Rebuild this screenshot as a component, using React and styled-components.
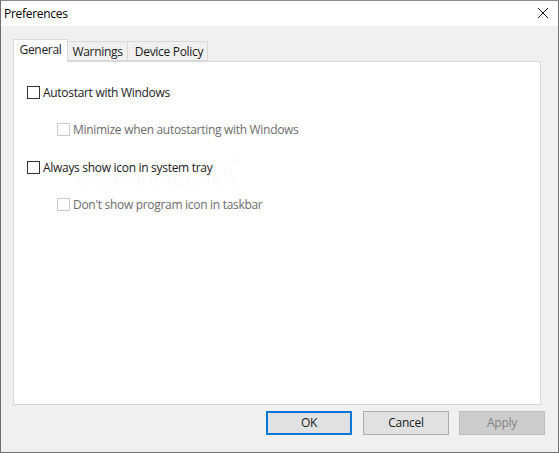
import React from 'react';
import styled, { createGlobalStyle } from 'styled-components';

const Global = createGlobalStyle`
  html, body { margin: 0; padding: 0; background: #f0f0f0; }
  #root { width: 559px; height: 453px; overflow: hidden; }
  * { box-sizing: border-box; }
`;

const Dialog = styled.div`
  position: relative;
  width: 559px;
  height: 453px;
  display: flex;
  flex-direction: column;
  background: #f0f0f0;
  border: 1px solid #6f6f6f;
  border-top-color: #8a8a8a;
  font-family: "Open Sans", "Noto Sans", sans-serif;
  font-size: 12px;
  letter-spacing: -0.3px;
  color: #000;
`;

const TitleBar = styled.div`
  height: 25px;
  flex: none;
  background: #fff;
  display: flex;
  align-items: center;
  justify-content: space-between;
  padding: 0 10px 1px 3px;
`;

const CloseButton = styled.svg`
  width: 10px;
  height: 10px;
`;

const Content = styled.div`
  flex: 1;
  min-height: 0;
  display: flex;
  flex-direction: column;
  padding: 13px 13px 0 12px;
`;

const TabStrip = styled.div`
  display: flex;
  align-items: flex-end;
  height: 22px;
  flex: none;
  position: relative;
  z-index: 1;
`;

const Tab = styled.div`
  height: ${p => (p.$active ? '23px' : '20px')};
  width: ${p => p.$w}px;
  margin-bottom: ${p => (p.$active ? '-1px' : '0')};
  display: flex;
  justify-content: center;
  align-items: center;
  padding-bottom: ${p => (p.$active ? '4px' : '0')};
  padding-left: ${p => p.$shift || 0}px;
  background: ${p => (p.$active ? '#fff' : '#f0f0f0')};
  border: 1px solid #d9d9d9;
  border-bottom: ${p => (p.$active ? 'none' : '1px solid #d9d9d9')};
  border-left: ${p => (p.$first ? '1px solid #d9d9d9' : 'none')};
  color: #1a1a1a;
`;

const Pane = styled.div`
  position: relative;
  flex: none;
  height: 344px;
  margin-right: 4px;
  background: #fff;
  border: 1px solid #d9d9d9;
  padding: 21px 13px 0 13px;
  display: flex;
  flex-direction: column;
`;

const Row = styled.label`
  position: relative;
  display: flex;
  align-items: center;
  gap: 3px;
  height: 19px;
  margin-left: ${p => (p.$nested ? '30px' : '0')};
  margin-bottom: ${p => p.$gap}px;
  color: ${p => (p.$disabled ? '#6d6d6d' : '#1a1a1a')};
`;

const Box = styled.span`
  width: 13px;
  height: 13px;
  flex: none;
  background: #fff;
  border: 1px solid ${p => (p.$disabled ? '#cccccc' : '#333333')};
`;

const Watermark = styled.div`
  position: absolute;
  left: 61px;
  top: 95px;
  font-family: "Liberation Sans", sans-serif;
  font-size: 28px;
  font-weight: 700;
  letter-spacing: 0;
  color: #fff;
  text-shadow: 0 0 2px #ececec;
  pointer-events: none;
  white-space: nowrap;
  sup { font-size: 8px; vertical-align: 20px; font-weight: 400; }
`;

const Footer = styled.div`
  flex: 1;
  display: flex;
  justify-content: flex-end;
  gap: 10px;
  padding-top: 6px;
`;

const Button = styled.button`
  width: 86px;
  height: 24px;
  padding: 0 0 2px;
  margin-right: ${p => (p.$default ? '1px' : '0')};
  font: inherit;
  letter-spacing: inherit;
  color: ${p => (p.$disabled ? '#838383' : '#1a1a1a')};
  background: ${p => (p.$disabled ? '#cccccc' : '#e1e1e1')};
  border: ${p => (p.$default ? '2px solid #0078d7' : p.$disabled ? '1px solid #bfbfbf' : '1px solid #adadad')};
`;

const CloseIcon = () => (
  <CloseButton viewBox="0 0 10 10" fill="none" stroke="#111" strokeWidth="1">
    <path d="M0 0 L10 10 M10 0 L0 10" />
  </CloseButton>
);

export default function App() {
  return (
    <>
      <Global />
      <Dialog>
        <TitleBar>
          <span>Preferences</span>
          <CloseIcon />
        </TitleBar>
        <Content>
          <TabStrip>
            <Tab $active $first $w={55}>General</Tab>
            <Tab $w={60}>Warnings</Tab>
            <Tab $w={80} $shift={3}>Device Policy</Tab>
          </TabStrip>
          <Pane>
            <Watermark>SOFTPEDIA<sup>®</sup></Watermark>
            <Row $gap={18}><Box /><span>Autostart with Windows</span></Row>
            <Row $nested $disabled $gap={19}><Box $disabled /><span>Minimize when autostarting with Windows</span></Row>
            <Row $gap={18}><Box /><span>Always show icon in system tray</span></Row>
            <Row $nested $disabled $gap={0}><Box $disabled /><span>Don't show program icon in taskbar</span></Row>
          </Pane>
          <Footer>
            <Button $default>OK</Button>
            <Button>Cancel</Button>
            <Button $disabled disabled>Apply</Button>
          </Footer>
        </Content>
      </Dialog>
    </>
  );
}
